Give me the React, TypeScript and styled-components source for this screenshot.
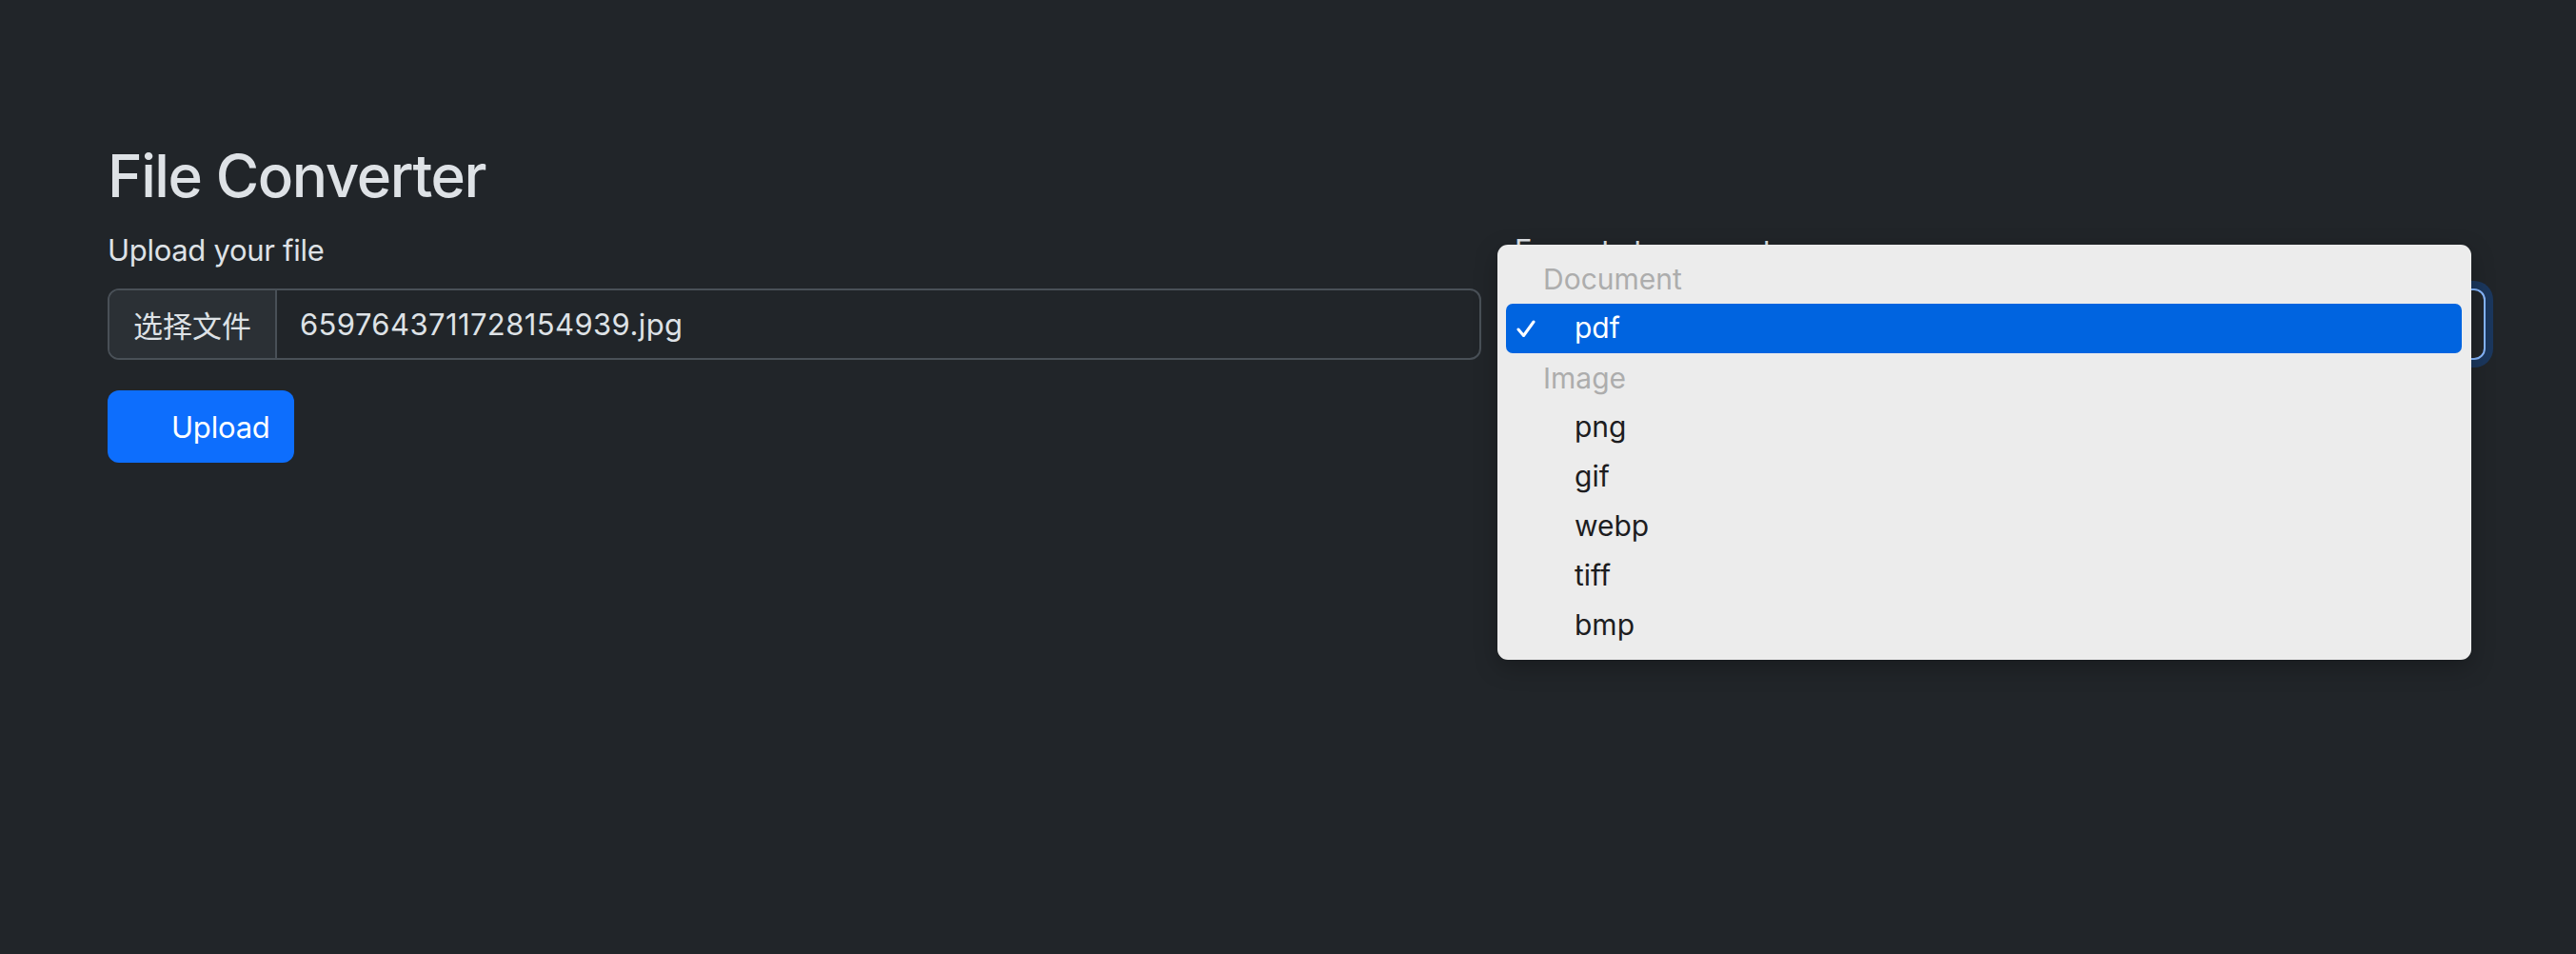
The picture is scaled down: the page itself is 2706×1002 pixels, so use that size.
import { Fragment } from 'react';
import styled, { createGlobalStyle } from 'styled-components';

const GlobalStyle = createGlobalStyle`
  html, body {
    margin: 0;
    background: #212529;
  }
  body {
    font-family: Inter, "Noto Sans", "Noto Sans CJK SC", sans-serif;
    color: #dee2e6;
  }
`;

const Page = styled.main`
  min-height: 1002px;
  box-sizing: border-box;
  padding: 146px 95px 0 113px;
`;

const Title = styled.h1`
  margin: 0 0 16px;
  font-size: 62px;
  font-weight: 500;
  line-height: 77px;
  letter-spacing: -1.4px;
  color: #dee2e6;
`;

const Row = styled.div`
  display: grid;
  grid-template-columns: minmax(0, 1443fr) minmax(0, 1020fr);
  column-gap: 35px;
`;

const Column = styled.div`
  position: relative;
  display: flex;
  flex-direction: column;
  align-items: flex-start;
`;

const Label = styled.label`
  display: block;
  margin-bottom: 16px;
  font-size: 31px;
  line-height: 48px;
  letter-spacing: -0.3px;
  color: #dee2e6;
`;

const InputGroup = styled.div`
  display: flex;
  align-self: stretch;
  height: 75px;
  box-sizing: border-box;
  border: 2px solid #495057;
  border-radius: 12px;
  overflow: hidden;
  background: #212529;
`;

const FileButton = styled.span`
  display: flex;
  align-items: center;
  padding: 0 25px;
  background: #2b3035;
  border-right: 2px solid #495057;
  font-family: "Noto Sans CJK SC", sans-serif;
  font-size: 31px;
  color: #dee2e6;
`;

const FileName = styled.span`
  display: flex;
  align-items: center;
  padding: 0 24px;
  font-size: 31px;
  letter-spacing: 0.4px;
  color: #dee2e6;
`;

const UploadButton = styled.button`
  margin-top: 32px;
  height: 76px;
  width: 196px;
  box-sizing: border-box;
  padding: 0 27px 0 67px;
  border: 0;
  border-radius: 12px;
  background: #0d6efd;
  color: #fff;
  font-family: Inter, sans-serif;
  font-size: 31px;
  letter-spacing: -0.2px;
  text-align: left;
`;

const Select = styled.div`
  align-self: stretch;
  height: 75px;
  box-sizing: border-box;
  padding: 0 24px;
  display: flex;
  align-items: center;
  border: 2px solid #86b7fe;
  border-radius: 12px;
  box-shadow: 0 0 0 8px rgba(13, 110, 253, 0.25);
  font-size: 31px;
  color: #dee2e6;
`;

/* native popup menu of the select, opened */
const Menu = styled.ul`
  position: absolute;
  top: 18px;
  left: -18px;
  width: 1023px;
  margin: 0;
  padding: 10px 10px 10px 9px;
  box-sizing: border-box;
  list-style: none;
  background: #ececec;
  border-radius: 11px;
  box-shadow: 0 8px 24px rgba(0, 0, 0, 0.25);
  z-index: 10;
`;

const GroupLabel = styled.li`
  height: 52px;
  padding-left: 39px;
  font-size: 30px;
  line-height: 52px;
  color: #adadad;
`;

const Option = styled.li<{ $selected?: boolean }>`
  position: relative;
  height: 52px;
  padding-left: 72px;
  border-radius: 7px;
  font-size: 30px;
  line-height: 51px;
  color: ${(p) => (p.$selected ? '#fff' : '#1d1d1f')};
  background: ${(p) => (p.$selected ? '#0064e0' : 'transparent')};
`;

const Check = styled.svg`
  position: absolute;
  left: 11px;
  top: 17px;
  width: 20px;
  height: 19px;
`;

const groups = [
  { label: 'Document', options: ['pdf'] },
  { label: 'Image', options: ['png', 'gif', 'webp', 'tiff', 'bmp'] },
];

export default function App() {
  const selected = 'pdf';
  return (
    <>
      <GlobalStyle />
      <Page>
        <Title>File Converter</Title>
        <Row>
          <Column>
            <Label>Upload your file</Label>
            <InputGroup>
              <FileButton>选择文件</FileButton>
              <FileName>6597643711728154939.jpg</FileName>
            </InputGroup>
            <UploadButton>Upload</UploadButton>
          </Column>
          <Column>
            <Label>Formats to convert</Label>
            <Select />
            <Menu>
              {groups.map((g) => (
                <Fragment key={g.label}>
                  <GroupLabel>{g.label}</GroupLabel>
                  {g.options.map((o) => (
                    <Option key={o} $selected={o === selected}>
                      {o === selected && (
                        <Check viewBox="0 0 20 19">
                          <polyline
                            points="2,10 7.5,16.5 18,2"
                            fill="none"
                            stroke="#fff"
                            strokeWidth="3"
                            strokeLinecap="round"
                            strokeLinejoin="round"
                          />
                        </Check>
                      )}
                      {o}
                    </Option>
                  ))}
                </Fragment>
              ))}
            </Menu>
          </Column>
        </Row>
      </Page>
    </>
  );
}
